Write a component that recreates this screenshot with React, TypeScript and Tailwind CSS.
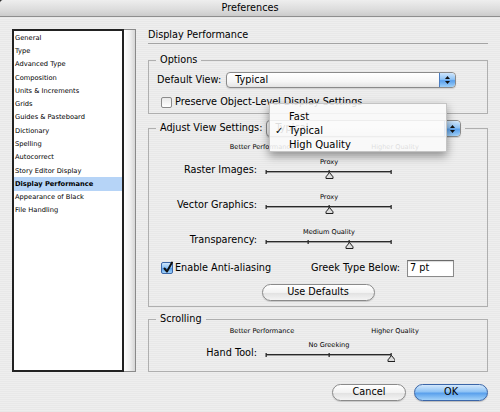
import React from "react";

const ITEMS = [
  "General",
  "Type",
  "Advanced Type",
  "Composition",
  "Units & Increments",
  "Grids",
  "Guides & Pasteboard",
  "Dictionary",
  "Spelling",
  "Autocorrect",
  "Story Editor Display",
  "Display Performance",
  "Appearance of Black",
  "File Handling",
];

// aqua blue stepper on the right of a popup
function Stepper() {
  return (
    <div className="flex w-[16px] items-center justify-center rounded-r-[4px] border-l border-[#4a7cc0] bg-[linear-gradient(to_bottom,#cfe6fc_0%,#8fc3f5_45%,#5aa0ec_55%,#9fd0f8_100%)]">
      <svg width="7" height="10" viewBox="0 0 7 10">
        <path d="M3.5 1 L6 4 L1 4 Z" fill="#111" />
        <path d="M3.5 9 L6 6 L1 6 Z" fill="#111" />
      </svg>
    </div>
  );
}

function Popup({ className, text }: { className: string; text: string }) {
  return (
    <div
      className={`flex items-stretch rounded-[4px] border border-[#8a8a8a] bg-[linear-gradient(to_bottom,#ffffff,#f6f6f6_60%,#e4e4e4)] shadow-[0_1px_1px_rgba(0,0,0,0.12)] ${className}`}
    >
      <div className="flex flex-1 items-center pl-[8px]">{text}</div>
      <Stepper />
    </div>
  );
}

function Slider({ caption, stops, at }: { caption: string; stops: number; at: number }) {
  const x0 = 3;
  const x1 = 128;
  const xs = Array.from({ length: stops }, (_, i) => x0 + ((x1 - x0) * i) / (stops - 1));
  const t = Math.round(xs[at]) + 0.5;
  return (
    <div className="ml-[6px] flex w-[132px] flex-col">
      <div className="h-[8px] whitespace-nowrap text-center text-[6.6px] leading-[8px]">{caption}</div>
      <svg width="132" height="14" viewBox="0 0 132 14">
        <rect x={x0} y="5" width={x1 - x0} height="1.4" fill="#2a2a2a" />
        {xs.map((x, i) => (
          <rect key={i} x={Math.round(x) - 0.5} y="4" width="1.3" height="4" fill="#2a2a2a" />
        ))}
        <path
          d={`M${t} 6.5 L${t + 3.5} 10.8 L${t + 3.5} 12.5 L${t - 3.5} 12.5 L${t - 3.5} 10.8 Z`}
          fill="#dcdcdc"
          stroke="#1e1e1e"
          strokeWidth="1"
        />
      </svg>
    </div>
  );
}

function SliderRow({ label, caption, stops, at, className }: { label: string; caption: string; stops: number; at: number; className: string }) {
  return (
    <div className={`flex ${className}`}>
      <div className="w-[108px] pt-[6px] text-right leading-[12px]">{label}</div>
      <Slider caption={caption} stops={stops} at={at} />
    </div>
  );
}

function Ends({ className }: { className: string }) {
  return (
    <div className={`flex h-[8px] pl-[63px] text-[6.6px] leading-[8px] ${className}`}>
      <span className="w-[100px] text-center">Better Performance</span>
      <span className="ml-[33px] w-[100px] text-center">Higher Quality</span>
    </div>
  );
}

export default function App() {
  return (
    <div className="relative h-[412px] w-[500px] overflow-hidden bg-[#2e2e2e] font-['DejaVu_Sans',sans-serif] text-[9.7px] text-black">
      <div className="flex h-full flex-col rounded-tl-[4px] bg-[repeating-linear-gradient(to_bottom,#eeeeee_0px,#eeeeee_1px,#e8e8e8_1px,#e8e8e8_2px)]">
        {/* title bar */}
        <div className="flex h-[17px] items-center justify-center rounded-tl-[4px] border-b border-[#8e8e8e] bg-[linear-gradient(to_bottom,#eeeeee,#dcdcdc_60%,#cbcbcb)] leading-none">
          Preferences
        </div>

        <div className="flex pl-[12px] pt-[12px]">
          {/* category list */}
          <div className="flex h-[343px] w-[124px]">
            <div className="w-[112px] border-2 border-[#222] bg-white text-[6.7px]">
              {ITEMS.map((it) =>
                it === "Display Performance" ? (
                  <div key={it} className="flex h-[13.3px] items-center bg-[#b6d4f7] pl-[1px] font-bold">
                    {it}
                  </div>
                ) : (
                  <div key={it} className="flex h-[13.3px] items-center pl-[1px]">
                    {it}
                  </div>
                )
              )}
            </div>
            <div className="w-[12px] border-y border-r border-[#8a8a8a] bg-[linear-gradient(to_right,#ffffff,#f2f2f2_50%,#d6d6d6)]" />
          </div>

          {/* right side */}
          <div className="ml-[12px] flex w-[340px] flex-col">
            <div className="border-b border-[#a4a4a4] pb-[2px] leading-[12px]">Display Performance</div>

            <fieldset className="mt-[10px] border border-[#afafaf] pb-[5px]">
              <legend className="ml-[7px] px-[4px] leading-[12px]">Options</legend>
              <div className="mt-[6px] flex h-[16px] items-center pl-[8px]">
                <span>Default View:</span>
                <Popup className="ml-[5px] h-[16px] w-[230px]" text="Typical" />
              </div>
              <div className="mt-[8px] flex h-[12px] items-center pl-[12px]">
                <div className="h-[11px] w-[11px] rounded-[2px] border border-[#8a8a8a] bg-[linear-gradient(to_bottom,#e8e8e8,#ffffff)]" />
                <span className="ml-[3px]">Preserve Object-Level Display Settings</span>
              </div>
            </fieldset>

            <fieldset className="mt-[6px] border border-[#afafaf] pb-[5px]">
              <legend className="ml-[7px] px-[4px]">
                <div className="flex items-center">
                  <span>Adjust View Settings:</span>
                  <Popup className="ml-[4px] h-[17px] w-[195px]" text="Typical" />
                </div>
              </legend>
              <Ends className="mt-[6px]" />
              <SliderRow className="mt-[7px]" label="Raster Images:" caption="Proxy" stops={3} at={1} />
              <SliderRow className="mt-[13px]" label="Vector Graphics:" caption="Proxy" stops={3} at={1} />
              <SliderRow className="mt-[13px]" label="Transparency:" caption="Medium Quality" stops={4} at={2} />

              <div className="mt-[10px] flex h-[17px] items-center pl-[12px]">
                <div className="flex w-[150px] items-center">
                  <div className="relative h-[12px] w-[12px] rounded-[2px] border border-[#3b66a8] bg-[linear-gradient(to_bottom,#cfe6fc_0%,#8fc3f5_45%,#5aa0ec_55%,#9fd0f8_100%)]">
                    <svg className="absolute left-[0px] top-[-2px]" width="12" height="13" viewBox="0 0 12 13">
                      <path d="M2.5 7.5 L5 10.5 L10 1.5" fill="none" stroke="#111" strokeWidth="2" strokeLinecap="round" strokeLinejoin="round" />
                    </svg>
                  </div>
                  <span className="ml-[2px]">Enable Anti-aliasing</span>
                </div>
                <span>Greek Type Below:</span>
                <div className="ml-[7px] flex h-[17px] w-[47px] items-center border border-[#8a8a8a] border-t-[#6a6a6a] bg-white pl-[2px] shadow-[inset_0_1px_1px_rgba(0,0,0,0.15)]">
                  7 pt
                </div>
              </div>

              <div className="mt-[7px] flex justify-center">
                <div className="flex h-[17px] w-[113px] items-center justify-center rounded-full border border-[#8a8a8a] bg-[linear-gradient(to_bottom,#ffffff,#f2f2f2_50%,#e2e2e2_55%,#f4f4f4)] shadow-[0_1px_1px_rgba(0,0,0,0.15)]">
                  Use Defaults
                </div>
              </div>
            </fieldset>

            <fieldset className="mt-[6px] border border-[#afafaf] pb-[8px]">
              <legend className="ml-[7px] px-[4px] leading-[12px]">Scrolling</legend>
              <Ends className="mt-[2px]" />
              <SliderRow className="mt-[6px]" label="Hand Tool:" caption="No Greeking" stops={3} at={2} />
            </fieldset>
          </div>
        </div>

        {/* dialog buttons */}
        <div className="mt-[12px] flex justify-end gap-[8px] pr-[12px]">
          <div className="flex h-[17px] w-[74px] items-center justify-center rounded-full border border-[#8a8a8a] bg-[linear-gradient(to_bottom,#ffffff,#f2f2f2_50%,#e2e2e2_55%,#f4f4f4)] shadow-[0_1px_1px_rgba(0,0,0,0.15)]">
            Cancel
          </div>
          <div className="flex h-[17px] w-[74px] items-center justify-center rounded-full border border-[#3b66a8] bg-[linear-gradient(to_bottom,#d3e8fc_0%,#8fc3f5_45%,#5aa0ec_55%,#a2d2f9_100%)] shadow-[0_1px_1px_rgba(0,0,0,0.2)]">
            OK
          </div>
        </div>
      </div>

      {/* open popup menu for Adjust View Settings */}
      <div className="absolute left-[269px] top-[103px] h-[49px] w-[178px] border border-[#c4c4c4] bg-[#fbfbfb]/[0.88] pt-[5px] text-[10px] shadow-[0_4px_9px_rgba(0,0,0,0.4)]">
        <div className="flex h-[14px] items-center pl-[19px]">Fast</div>
        <div className="flex h-[14px] items-center">
          <span className="w-[19px] pl-[5px]">✓</span>
          <span>Typical</span>
        </div>
        <div className="flex h-[14px] items-center pl-[19px]">High Quality</div>
      </div>
    </div>
  );
}
